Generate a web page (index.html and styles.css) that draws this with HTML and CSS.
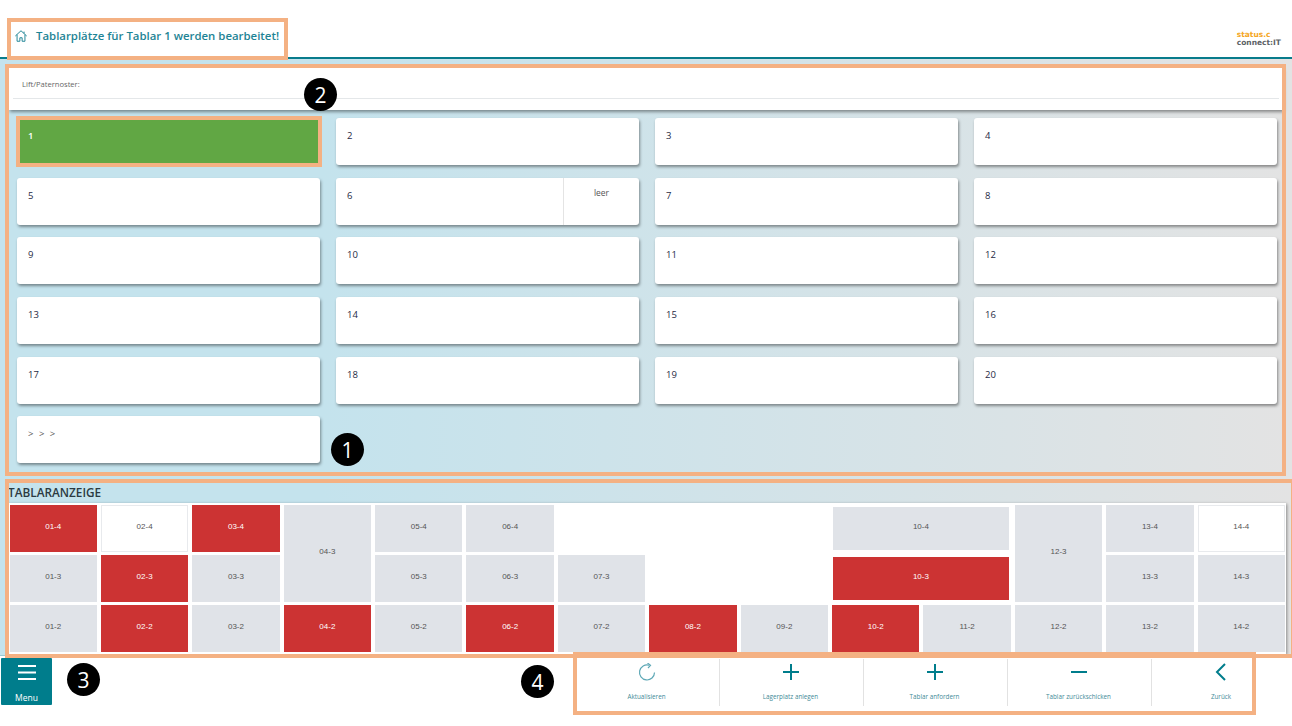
FILE: index.html
```html
<!DOCTYPE html>
<html lang="de">
<head>
    <meta charset="UTF-8">
    <title>Tablarplätze</title>
    <link rel="stylesheet" href="styles.css">
</head>
<body>
    <header class="top-bar">
        <div class="page-title">
            <svg class="home-icon" viewBox="0 0 16 16" fill="none" stroke="currentColor" stroke-width="1.1">
                <path d="M1.5 8 8 2l6.500 6"/>
                <path d="M3.500 6.500V14h3.200v-4h2.600v4h3.200V6.500"/>
                <path d="M11.500 3v2"/>
            </svg>
            <span>Tablarplätze für Tablar 1 werden bearbeitet!</span>
        </div>
        <div class="logo">
            <span class="logo-top">status.c</span>
            <span class="logo-bottom">connect:IT</span>
        </div>
    </header>

    <main class="content">
        <div class="lift-panel">
            <div class="lift-label">Lift/Paternoster:</div>
        </div>

        <div class="card-grid">
            <div class="card card-active">1</div>
            <div class="card">2</div>
            <div class="card">3</div>
            <div class="card">4</div>
            <div class="card">5</div>
            <div class="card card-split">
                <span class="card-main">6</span>
                <span class="card-side">leer</span>
            </div>
            <div class="card">7</div>
            <div class="card">8</div>
            <div class="card">9</div>
            <div class="card">10</div>
            <div class="card">11</div>
            <div class="card">12</div>
            <div class="card">13</div>
            <div class="card">14</div>
            <div class="card">15</div>
            <div class="card">16</div>
            <div class="card">17</div>
            <div class="card">18</div>
            <div class="card">19</div>
            <div class="card">20</div>
            <div class="card card-more">&gt; &gt; &gt;</div>
        </div>

        <h2 class="section-title">Tablaranzeige</h2>

        <div class="tray">
            <div class="cell red">01-4</div>
            <div class="cell white">02-4</div>
            <div class="cell red">03-4</div>
            <div class="cell tall">04-3</div>
            <div class="cell">05-4</div>
            <div class="cell">06-4</div>
            <div class="cell blank"></div>
            <div class="cell blank"></div>
            <div class="cell blank"></div>
            <div class="cell wide">10-4</div>
            <div class="cell tall">12-3</div>
            <div class="cell">13-4</div>
            <div class="cell white">14-4</div>

            <div class="cell">01-3</div>
            <div class="cell red">02-3</div>
            <div class="cell">03-3</div>
            <div class="cell">05-3</div>
            <div class="cell">06-3</div>
            <div class="cell">07-3</div>
            <div class="cell blank"></div>
            <div class="cell blank"></div>
            <div class="cell wide red">10-3</div>
            <div class="cell">13-3</div>
            <div class="cell">14-3</div>

            <div class="cell">01-2</div>
            <div class="cell red">02-2</div>
            <div class="cell">03-2</div>
            <div class="cell red">04-2</div>
            <div class="cell">05-2</div>
            <div class="cell red">06-2</div>
            <div class="cell">07-2</div>
            <div class="cell red">08-2</div>
            <div class="cell">09-2</div>
            <div class="cell red">10-2</div>
            <div class="cell">11-2</div>
            <div class="cell">12-2</div>
            <div class="cell">13-2</div>
            <div class="cell">14-2</div>
        </div>
    </main>

    <footer class="bottom-bar">
        <button class="menu-button">
            <svg class="menu-icon" viewBox="0 0 18 16" fill="none" stroke="currentColor" stroke-width="2">
                <path d="M0 2h18M0 8.500h18M0 15h18"/>
            </svg>
            <span>Menu</span>
        </button>

        <div class="toolbar">
            <div class="tool">
                <svg class="tool-icon tool-icon-light" viewBox="0 0 18 18" fill="none" stroke="currentColor" stroke-width="1.2">
                    <path d="M11.200 2.300A7.500 7.500 0 1 0 16.500 9.500"/>
                    <path d="M9.500 0 12.500 2.400 10 5"/>
                </svg>
                <span>Aktualisieren</span>
            </div>
            <div class="tool">
                <svg class="tool-icon" viewBox="0 0 18 18" fill="none" stroke="currentColor" stroke-width="2">
                    <path d="M1 9h16M9 1v16"/>
                </svg>
                <span>Lagerplatz anlegen</span>
            </div>
            <div class="tool">
                <svg class="tool-icon" viewBox="0 0 18 18" fill="none" stroke="currentColor" stroke-width="2">
                    <path d="M1 9h16M9 1v16"/>
                </svg>
                <span>Tablar anfordern</span>
            </div>
            <div class="tool">
                <svg class="tool-icon" viewBox="0 0 18 18" fill="none" stroke="currentColor" stroke-width="2">
                    <path d="M1 9h16"/>
                </svg>
                <span>Tablar zurückschicken</span>
            </div>
            <div class="tool tool-last">
                <svg class="tool-icon" viewBox="0 0 18 18" fill="none" stroke="currentColor" stroke-width="2">
                    <path d="M13 1 5 9l8 8"/>
                </svg>
                <span>Zurück</span>
            </div>
        </div>
    </footer>

    <!-- annotations over the screenshot -->
    <div class="mark mark-title"></div>
    <div class="mark mark-panel"></div>
    <div class="mark mark-card"></div>
    <div class="mark mark-tray"></div>
    <div class="mark mark-tools"></div>
    <div class="badge badge-1">1</div>
    <div class="badge badge-2">2</div>
    <div class="badge badge-3">3</div>
    <div class="badge badge-4">4</div>
</body>
</html>
```

FILE: styles.css
```css
* {
    box-sizing: border-box;
}

body {
    margin: 0;
    width: 1292px;
    height: 726px;
    position: relative;
    overflow: hidden;
    display: flex;
    flex-direction: column;
    background: #fff;
    font-family: "Open Sans", sans-serif;
}

.top-bar {
    height: 59px;
    flex: none;
    display: flex;
    justify-content: space-between;
    align-items: flex-end;
    background: #fff;
    border-bottom: 2px solid #087c8c;
}

.page-title {
    display: flex;
    align-items: center;
    height: 41px;
    padding: 0 0 2px 14px;
    color: #1e8495;
    font-size: 11.4px;
    font-weight: 600;
}

.home-icon {
    width: 14px;
    height: 14px;
    margin-right: 8px;
}

.logo {
    display: flex;
    flex-direction: column;
    margin: 0 11px 10px 0;
    font-family: "DejaVu Sans", sans-serif;
    font-size: 7.5px;
    font-weight: bold;
    line-height: 8px;
}

.logo-top {
    color: #f5a623;
}

.logo-bottom {
    color: #5c6266;
}

.content {
    height: 596px;
    flex: none;
    padding-top: 9px;
    background: linear-gradient(to right, #c4e3ed 25%, #e3e3e3 100%);
}

.lift-panel {
    height: 42px;
    margin: 0 9px;
    padding: 0 4px;
    background: #fff;
    box-shadow: 1px 2px 3px rgba(0, 0, 0, 0.4);
}

.lift-label {
    height: 31px;
    padding: 10px 0 0 9px;
    border-bottom: 1px solid #e4e7e9;
    color: #666;
    font-size: 7.6px;
    line-height: 12px;
}

.card-grid {
    display: grid;
    grid-template-columns: repeat(4, 303px);
    grid-auto-rows: 47px;
    column-gap: 16px;
    row-gap: 12.7px;
    margin-top: 8px;
    padding-left: 17px;
}

.card {
    padding: 11px 11px;
    background: #fff;
    border-radius: 3px;
    box-shadow: 1px 2px 3px rgba(0, 0, 0, 0.4);
    color: #1f2a44;
    font-size: 9.5px;
    font-weight: 500;
    line-height: 14px;
}

.card-active {
    background: #61a744;
    color: #fff;
    font-weight: 600;
    box-shadow: none;
}

.card-split {
    display: flex;
    padding: 0;
}

.card-main {
    flex: 1;
    padding: 11px 11px;
}

.card-side {
    width: 76px;
    padding-top: 8px;
    border-left: 1px solid #e4e4e4;
    color: #555;
    font-size: 8.5px;
    font-weight: 400;
    text-align: center;
}

.card-more {
    color: #555;
    font-weight: 400;
    letter-spacing: 1.5px;
}

.section-title {
    margin: 22px 0 0 8px;
    height: 18px;
    color: #2b3a42;
    font-size: 11.8px;
    font-weight: 600;
    line-height: 14px;
    text-transform: uppercase;
}

.tray {
    display: grid;
    grid-template-columns: repeat(14, 87.4px);
    grid-template-rows: repeat(3, 46.7px);
    column-gap: 4px;
    row-gap: 3.3px;
    width: 1278px;
    height: 151px;
    margin-left: 8px;
    padding: 2px 0 0 1.500px;
    background: #fff;
    box-shadow: 1px 1px 3px rgba(0, 0, 0, 0.4);
}

.cell {
    display: flex;
    align-items: center;
    justify-content: center;
    padding-bottom: 5px;
    background: #e0e3e8;
    color: #555;
    font-family: "Liberation Sans", sans-serif;
    font-size: 8px;
}

.cell.red {
    background: #cc3333;
    color: #fff;
}

.cell.white {
    background: #fff;
    border: 1px solid #e8eaed;
}

.cell.blank {
    background: none;
}

.cell.tall {
    grid-row: span 2;
}

.cell.wide {
    grid-column: span 2;
    margin: 2px 2px 2px 1px;
}

.bottom-bar {
    flex: 1;
    position: relative;
    display: flex;
    align-items: flex-start;
    border-top: 1px solid #9cc9d2;
    background: #fff;
}

.menu-button {
    width: 51px;
    height: 47px;
    margin: 2px 0 0 1px;
    padding: 6px 0 0;
    display: flex;
    flex-direction: column;
    align-items: center;
    border: none;
    border-radius: 1px;
    background: #007d8c;
    color: #fff;
    font-family: "Open Sans", sans-serif;
    font-size: 8.5px;
}

.menu-icon {
    width: 18px;
    height: 16px;
    margin-bottom: 12px;
}

.toolbar {
    display: flex;
    margin: 3px 0 0 524px;
}

.tool {
    width: 144px;
    height: 47px;
    padding: 4px 2px 0 0;
    display: flex;
    flex-direction: column;
    align-items: center;
    border-right: 1px solid #e2e2e2;
    color: #3f8b98;
    font-size: 6.3px;
}

.tool-last {
    width: 140px;
    border-right: none;
}

.tool-icon {
    width: 18px;
    height: 18px;
    margin-bottom: 11px;
    color: #007d8c;
}

.tool-icon-light {
    color: #5ea8b6;
}

/* orange frames and numbered dots */
.mark {
    position: absolute;
    border: 4px solid #f4b183;
    pointer-events: none;
}

.mark-title {
    left: 7px;
    top: 18px;
    width: 281px;
    height: 42px;
}

.mark-panel {
    left: 5px;
    top: 64px;
    width: 1281px;
    height: 412px;
}

.mark-card {
    left: 16px;
    top: 116px;
    width: 306px;
    height: 51px;
}

.mark-tray {
    left: 5px;
    top: 479px;
    width: 1290px;
    height: 179px;
}

.mark-tools {
    left: 573px;
    top: 652px;
    width: 683px;
    height: 63px;
}

.badge {
    position: absolute;
    width: 33px;
    height: 33px;
    display: flex;
    align-items: center;
    justify-content: center;
    border-radius: 50%;
    background: #000;
    color: #fff;
    font-family: "Open Sans", sans-serif;
    font-size: 21px;
}

.badge-1 {
    left: 331px;
    top: 433px;
}

.badge-2 {
    left: 304px;
    top: 78px;
}

.badge-3 {
    left: 67px;
    top: 663px;
}

.badge-4 {
    left: 521px;
    top: 665px;
}
```
